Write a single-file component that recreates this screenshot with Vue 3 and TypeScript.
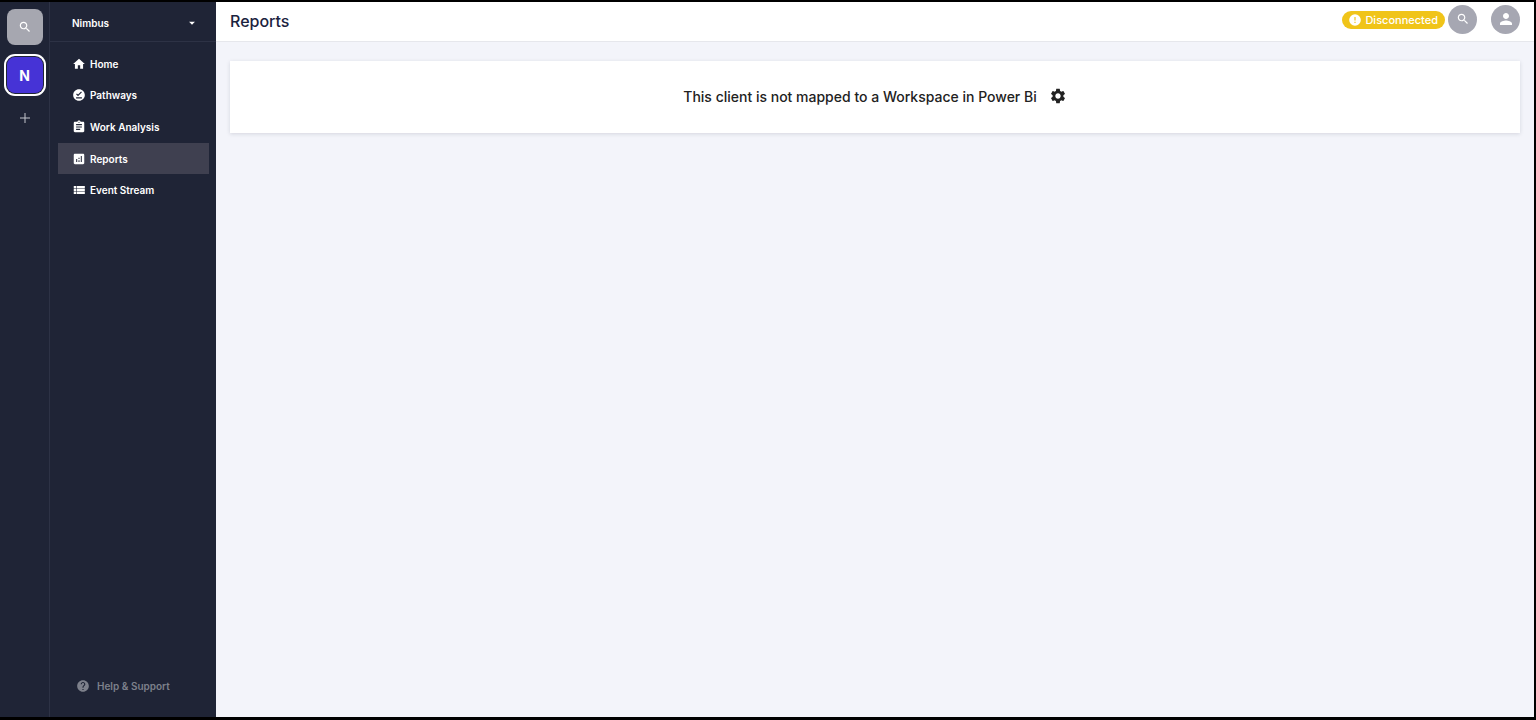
<script setup lang="ts">
interface NavItem {
  label: string
  path: string
}

const navItems: NavItem[] = [
  { label: 'Home', path: 'M10 20v-6h4v6h5v-8h3L12 3 2 12h3v8z' },
  {
    label: 'Pathways',
    path: 'M12 2C6.5 2 2 6.500 2 12s4.500 10 10 10 10-4.500 10-10S17.500 2 12 2zm5 16H7v-2h10v2zm-6.700-4L7 10.700l1.400-1.400 1.900 1.900 5.300-5.300L17 7.300 10.300 14z',
  },
  {
    label: 'Work Analysis',
    path: 'M19 3h-4.180C14.400 1.840 13.300 1 12 1s-2.400.840-2.820 2H5c-1.100 0-2 .9-2 2v14c0 1.100.9 2 2 2h14c1.100 0 2-.9 2-2V5c0-1.100-.9-2-2-2zm-7 0c.55 0 1 .45 1 1s-.45 1-1 1-1-.45-1-1 .45-1 1-1zm2 14H7v-2h7v2zm3-4H7v-2h10v2zm0-4H7V7h10v2z',
  },
  {
    label: 'Reports',
    path: 'M19 3H5c-1.100 0-2 .9-2 2v14c0 1.100.9 2 2 2h14c1.100 0 2-.9 2-2V5c0-1.100-.9-2-2-2zM9 17H7v-5h2v5zm4 0h-2v-3h2v3zm0-5h-2v-2h2v2zm4 5h-2V7h2v10z',
  },
  {
    label: 'Event Stream',
    path: 'M3 5h4v4H3zM8 5h14v4H8zM3 10h4v4H3zM8 10h14v4H8zM3 15h4v4H3zM8 15h14v4H8z',
  },
]

const activeLabel = 'Reports'
const searchPath =
  'M15.500 14h-.79l-.28-.27C15.410 12.590 16 11.110 16 9.500 16 5.910 13.090 3 9.500 3S3 5.910 3 9.500 5.910 16 9.500 16c1.610 0 3.090-.59 4.230-1.570l.27.28v.79l5 4.990L20.490 19l-4.990-5zm-6 0C7.010 14 5 11.990 5 9.500S7.010 5 9.500 5 14 7.010 14 9.500 11.990 14 9.500 14z'
</script>

<template>
  <div class="app">
    <aside class="rail">
      <button class="tile search-tile" type="button" aria-label="Search clients">
        <svg class="icon" viewBox="0 0 24 24"><path :d="searchPath" /></svg>
      </button>
      <button class="tile client-tile" type="button">N</button>
      <button class="add" type="button" aria-label="Add client">
        <svg viewBox="0 0 12 12"><path d="M6 1v10M1 6h10" /></svg>
      </button>
    </aside>

    <aside class="sidebar">
      <button class="switcher" type="button">
        <span>Nimbus</span>
        <svg class="icon" viewBox="0 0 24 24"><path d="M7 10l5 5 5-5z" /></svg>
      </button>
      <nav class="nav">
        <a
          v-for="item in navItems"
          :key="item.label"
          href="#"
          class="nav-link"
          :class="{ active: item.label === activeLabel }"
        >
          <svg class="icon" viewBox="0 0 24 24"><path :d="item.path" /></svg>
          <span>{{ item.label }}</span>
        </a>
      </nav>
      <a class="help" href="#">
        <svg class="icon" viewBox="0 0 24 24">
          <path
            d="M12 2C6.480 2 2 6.480 2 12s4.480 10 10 10 10-4.480 10-10S17.520 2 12 2zm1 17h-2v-2h2v2zm2.070-7.750l-.9.920C13.450 12.900 13 13.500 13 15h-2v-.5c0-1.100.45-2.100 1.170-2.830l1.240-1.260c.37-.36.59-.86.59-1.410 0-1.100-.9-2-2-2s-2 .9-2 2H8c0-2.210 1.790-4 4-4s4 1.790 4 4c0 .88-.36 1.680-.93 2.250z"
          />
        </svg>
        <span>Help &amp; Support</span>
      </a>
    </aside>

    <div class="page">
      <header class="topbar">
        <h1>Reports</h1>
        <div class="actions">
          <span class="status">
            <svg class="icon" viewBox="0 0 24 24">
              <path d="M12 2a10 10 0 100 20 10 10 0 000-20zm1 15h-2v-2h2v2zm0-4h-2V7h2v6z" />
            </svg>
            Disconnected
          </span>
          <button class="round" type="button" aria-label="Search">
            <svg class="icon" viewBox="0 0 24 24"><path :d="searchPath" /></svg>
          </button>
          <button class="round account" type="button" aria-label="Account">
            <svg class="icon" viewBox="0 0 24 24">
              <path d="M12 12c2.210 0 4-1.790 4-4s-1.790-4-4-4-4 1.790-4 4 1.790 4 4 4zm0 2c-2.670 0-8 1.340-8 4v2h16v-2c0-2.660-5.330-4-8-4z" />
            </svg>
          </button>
        </div>
      </header>
      <main class="content">
        <section class="card">
          <p>This client is not mapped to a Workspace in Power Bi</p>
          <button class="settings" type="button" aria-label="Workspace settings">
            <svg class="icon" viewBox="0 0 24 24">
              <path
                d="M19.140 12.940c.04-.3.06-.61.06-.94 0-.32-.02-.64-.07-.94l2.030-1.580c.18-.14.23-.41.12-.61l-1.920-3.320c-.12-.22-.37-.29-.59-.22l-2.390.96c-.5-.38-1.030-.7-1.620-.94l-.36-2.540c-.04-.24-.24-.41-.48-.41h-3.840c-.24 0-.43.17-.47.41l-.36 2.540c-.59.24-1.130.57-1.620.94l-2.390-.96c-.22-.08-.47 0-.59.22L2.740 8.870c-.12.21-.08.47.12.61l2.030 1.580c-.05.3-.09.63-.09.94s.02.64.07.94l-2.030 1.580c-.18.14-.23.41-.12.61l1.920 3.320c.12.22.37.29.59.22l2.390-.96c.5.38 1.030.7 1.620.94l.36 2.540c.05.24.24.41.48.41h3.840c.24 0 .44-.17.47-.41l.36-2.540c.59-.24 1.130-.56 1.620-.94l2.390.96c.22.08.47 0 .59-.22l1.920-3.320c.12-.22.07-.47-.12-.61l-2.010-1.580zM12 15.600c-1.980 0-3.600-1.620-3.600-3.600s1.620-3.600 3.600-3.600 3.600 1.620 3.600 3.600-1.620 3.600-3.600 3.600z"
              />
            </svg>
          </button>
        </section>
      </main>
    </div>
  </div>
</template>

<style>
body {
  margin: 0;
  background: #000;
}
</style>

<style scoped>
.app {
  box-sizing: border-box;
  display: flex;
  min-height: 100vh;
  border: solid #000;
  border-width: 2px 2px 3px 0;
  background: #f3f4fa;
  font-family: Inter, 'Liberation Sans', sans-serif;
  color: #1b2340;
}

button {
  padding: 0;
  border: 0;
  background: none;
  color: inherit;
  font: inherit;
  cursor: pointer;
}

a {
  color: inherit;
  text-decoration: none;
}

.icon {
  display: block;
  flex: none;
  width: 14px;
  height: 14px;
  fill: currentColor;
}

.rail {
  box-sizing: border-box;
  flex: none;
  display: flex;
  flex-direction: column;
  align-items: center;
  width: 50px;
  padding-top: 7px;
  border-right: 1px solid #2d3245;
  background: #1f2436;
}

.tile {
  display: flex;
  align-items: center;
  justify-content: center;
  width: 36px;
  height: 36px;
  border-radius: 8px;
  color: #fff;
}

.search-tile {
  background: #a6a7b0;
}

.client-tile {
  margin-top: 12px;
  background: #4633d6;
  box-shadow: 0 0 0 1px #1f2436, 0 0 0 3px #fff;
  font-size: 14px;
  font-weight: 700;
}

.add {
  display: flex;
  align-items: center;
  justify-content: center;
  width: 24px;
  height: 24px;
  margin-top: 13px;
}

.add svg {
  width: 12px;
  height: 12px;
  fill: none;
  stroke: #c4c5cc;
  stroke-width: 1;
}

.sidebar {
  flex: none;
  display: flex;
  flex-direction: column;
  width: 166px;
  background: #1f2436;
  color: #fff;
  font-size: 10px;
  font-weight: 600;
}

.switcher {
  box-sizing: border-box;
  display: flex;
  align-items: center;
  justify-content: space-between;
  height: 40px;
  padding: 2px 17px 0 22px;
  border-bottom: 1px solid #2d3245;
}

.nav {
  display: grid;
  grid-auto-rows: 1fr;
  height: 158px;
  margin: 6px 7px 0 8px;
}

.nav-link {
  display: flex;
  align-items: center;
  gap: 4px;
  padding-left: 14px;
}

.nav-link.active {
  background: #3f4050;
}

.help {
  display: flex;
  align-items: center;
  gap: 7px;
  margin-top: auto;
  padding: 0 26px 24px;
  color: #7d808b;
}

.page {
  flex: 1;
  min-width: 0;
}

.topbar {
  box-sizing: border-box;
  display: flex;
  align-items: center;
  justify-content: space-between;
  height: 40px;
  padding: 0 14px 4px;
  border-bottom: 1px solid #e6e7ec;
  background: #fff;
}

h1 {
  margin: 0;
  padding-top: 2px;
  font-size: 16px;
  font-weight: 500;
}

.actions {
  display: flex;
  align-items: center;
}

.status {
  display: flex;
  align-items: center;
  gap: 3px;
  height: 18px;
  margin-right: 3px;
  padding: 0 7px 0 6px;
  border-radius: 9px;
  background: #f0c419;
  color: #fff;
  font-size: 11px;
  font-weight: 500;
}

.round {
  box-sizing: border-box;
  display: flex;
  align-items: center;
  justify-content: center;
  width: 29px;
  height: 29px;
  padding-bottom: 2px;
  border-radius: 50%;
  background: #a6a7b2;
  color: #fff;
}

.account {
  margin-left: 14px;
}

.account .icon {
  width: 18px;
  height: 18px;
}

.content {
  padding: 19px 14px;
}

.card {
  box-sizing: border-box;
  display: flex;
  align-items: center;
  justify-content: center;
  gap: 12px;
  min-height: 72px;
  padding-bottom: 2px;
  background: #fff;
  box-shadow: 0 1px 4px rgba(31, 36, 54, 0.14);
  color: #222;
}

.card p {
  margin: 0;
  font-size: 14px;
  font-weight: 500;
}

.settings .icon {
  width: 18px;
  height: 18px;
}
</style>
